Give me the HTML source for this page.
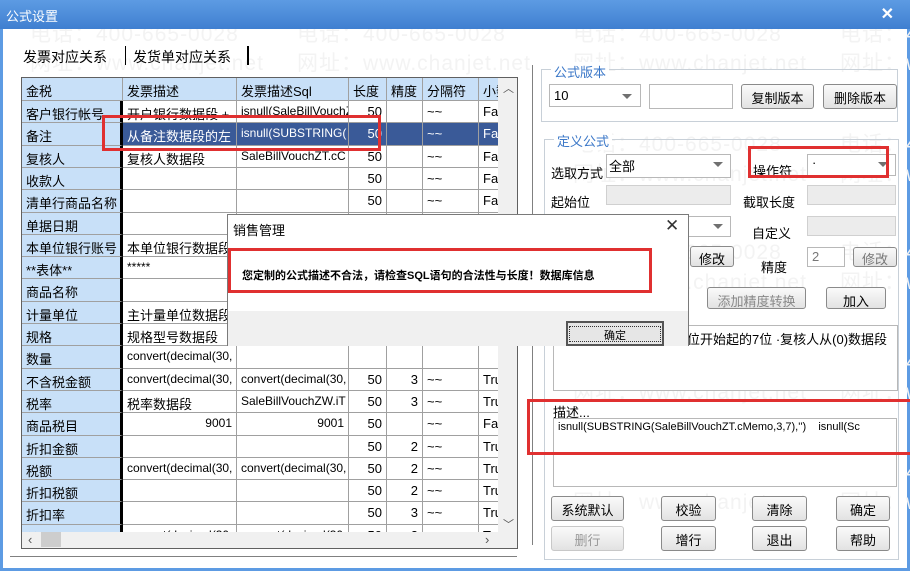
<!DOCTYPE html>
<html><head><meta charset="utf-8"><style>
*{margin:0;padding:0;box-sizing:border-box}
body{width:910px;height:571px;overflow:hidden;background:#fff;font-family:"Liberation Sans","Noto Sans CJK SC",sans-serif;font-size:13px;color:#000;position:relative}
.a{position:absolute}
.wm{position:absolute;color:#f3f3f3;font-size:21px;white-space:nowrap;letter-spacing:1px}
.title{left:0;top:0;width:910px;height:29px;background:linear-gradient(#5d9be3,#3f7fd0);color:#fff;font-size:13px;padding:6px 0 0 6px}
.cell{position:absolute;border-right:1px solid #a0a0a0;border-bottom:1px solid #a0a0a0;padding:3px 4px 0;white-space:nowrap;overflow:hidden;font-size:13px}
.hd{background:#c8e0f8}
.lc{background:#c8e0f8;border-right:3px solid #000}
.btn{position:absolute;border:1px solid #8a8a8a;border-radius:3px;background:linear-gradient(#fafafa,#e2e2e2);text-align:center;font-size:13px;padding-top:3px}
.inp{position:absolute;border:1px solid #b8b8b8;background:#fff}
.dis{background:#ececec;border-color:#d0d0d0}
.arrow{position:absolute;width:0;height:0;border-left:5px solid transparent;border-right:5px solid transparent;border-top:5px solid #707070}
.red{position:absolute;border:3px solid #e03030}
.grp{position:absolute;border:1px solid #c8d0d8}
.lg{position:absolute;background:#fff;color:#3c78c8;padding:0 3px;font-size:13px}
</style></head><body>
<div class="a" style="left:0;top:0;width:910px;height:571px;border:3px solid #5d9be3;border-top:none"></div>
<div class="wm" style="left:30px;top:18px">电话：400-665-0028</div><div class="wm" style="left:297px;top:18px">电话：400-665-0028</div><div class="wm" style="left:573px;top:18px">电话：400-665-0028</div><div class="wm" style="left:840px;top:18px">电话：4</div>
<div class="wm" style="left:30px;top:47px">网址：www.chanjet.net</div><div class="wm" style="left:297px;top:47px">网址：www.chanjet.net</div><div class="wm" style="left:573px;top:47px">网址：www.chanjet.net</div><div class="wm" style="left:840px;top:47px">网址：w</div>
<div class="wm" style="left:573px;top:128px">电话：400-665-0028</div><div class="wm" style="left:840px;top:128px">电话：4</div>
<div class="wm" style="left:573px;top:158px">网址：www.chanjet.net</div><div class="wm" style="left:840px;top:158px">网址：w</div>
<div class="wm" style="left:573px;top:236px">电话：400-665-0028</div><div class="wm" style="left:840px;top:236px">电话：4</div>
<div class="wm" style="left:573px;top:266px">网址：www.chanjet.net</div><div class="wm" style="left:840px;top:266px">网址：w</div>
<div class="wm" style="left:573px;top:346px">电话：400-665-0028</div><div class="wm" style="left:840px;top:346px">电话：4</div>
<div class="wm" style="left:573px;top:376px">网址：www.chanjet.net</div><div class="wm" style="left:840px;top:376px">网址：w</div>
<div class="wm" style="left:573px;top:456px">电话：400-665-0028</div><div class="wm" style="left:840px;top:456px">电话：4</div>
<div class="wm" style="left:573px;top:486px">网址：www.chanjet.net</div><div class="wm" style="left:840px;top:486px">网址：w</div>

<div class="a title">公式设置<span style="position:absolute;right:16px;top:4px;font-weight:bold;font-size:16px">✕</span></div>

<div class="a" style="left:23px;top:47px;font-size:14px">发票对应关系</div>
<div class="a" style="left:125px;top:46px;width:1px;height:19px;background:#000"></div>
<div class="a" style="left:133px;top:47px;font-size:14px">发货单对应关系</div>
<div class="a" style="left:247px;top:46px;width:2px;height:19px;background:#000"></div>
<div class="a" style="left:532px;top:65px;width:1px;height:480px;background:#808080"></div>
<div class="a" style="left:10px;top:556px;width:507px;height:1px;background:#808080"></div>

<div class="a" style="left:21px;top:77px;width:497px;height:472px;border:1px solid #606060;overflow:hidden;background:#fff">
<div id="g" style="position:absolute;left:0;top:0;width:476px;height:454px;overflow:hidden"></div>
<div class="a" style="left:476px;top:0;width:19px;height:454px;background:#f0f0f0"><div class="a" style="left:2px;top:172px;width:15px;height:15px;background:#cdcdcd"></div><div class="a" style="left:5px;top:2px;font-size:11px;color:#555">︿</div><div class="a" style="left:5px;top:438px;font-size:11px;color:#555">﹀</div></div>
<div class="a" style="left:0;top:454px;width:495px;height:16px;background:#f0f0f0"><div class="a" style="left:19px;top:0px;width:20px;height:15px;background:#cdcdcd"></div><div class="a" style="left:6px;top:0;color:#555">‹</div><div class="a" style="left:463px;top:0;color:#555">›</div></div>
</div>

<div class="grp" style="left:541px;top:69px;width:357px;height:53px"></div>
<div class="lg" style="left:551px;top:62px">公式版本</div>
<div class="inp" style="left:549px;top:84px;width:92px;height:23px;padding:3px 4px">10</div><div class="arrow" style="left:622px;top:94px"></div>
<div class="inp" style="left:649px;top:84px;width:84px;height:25px"></div>
<div class="btn" style="left:741px;top:84px;width:73px;height:25px">复制版本</div>
<div class="btn" style="left:823px;top:84px;width:74px;height:25px">删除版本</div>

<div class="grp" style="left:544px;top:139px;width:355px;height:421px"></div>
<div class="lg" style="left:554px;top:131px">定义公式</div>
<div class="a" style="left:551px;top:163px">选取方式</div>
<div class="inp" style="left:606px;top:154px;width:125px;height:24px;padding:1px 2px">全部</div><div class="arrow" style="left:713px;top:162px"></div>
<div class="a" style="left:753px;top:161px">操作符</div>
<div class="inp" style="left:807px;top:154px;width:89px;height:22px;padding:0 4px">·</div><div class="arrow" style="left:878px;top:162px"></div>
<div class="red" style="left:748px;top:146px;width:141px;height:32px"></div>
<div class="a" style="left:551px;top:192px">起始位</div>
<div class="inp dis" style="left:606px;top:185px;width:125px;height:20px"></div>
<div class="a" style="left:743px;top:192px">截取长度</div>
<div class="inp dis" style="left:807px;top:185px;width:89px;height:20px"></div>
<div class="inp" style="left:688px;top:216px;width:43px;height:21px"></div><div class="arrow" style="left:713px;top:224px"></div>
<div class="a" style="left:752px;top:223px">自定义</div>
<div class="inp dis" style="left:807px;top:216px;width:89px;height:20px"></div>
<div class="btn" style="left:690px;top:246px;width:44px;height:21px;padding-top:2px">修改</div>
<div class="a" style="left:761px;top:257px">精度</div>
<div class="inp" style="left:807px;top:247px;width:38px;height:20px;color:#777;padding:1px 4px">2</div>
<div class="btn" style="left:853px;top:247px;width:44px;height:20px;padding-top:1px;color:#777">修改</div>
<div class="btn" style="left:707px;top:287px;width:99px;height:22px;color:#888">添加精度转换</div>
<div class="btn" style="left:826px;top:287px;width:60px;height:22px">加入</div>
<div class="inp" style="left:553px;top:325px;width:345px;height:66px;overflow:hidden;white-space:nowrap;padding:3px 0 0 133px">位开始起的7位 ·复核人从(0)数据段</div>
<div class="a" style="left:553px;top:402px">描述...</div>
<div class="inp" style="left:553px;top:418px;width:344px;height:69px;overflow:hidden;white-space:nowrap;padding:2px 4px;font-size:11px">isnull(SUBSTRING(SaleBillVouchZT.cMemo,3,7),'')&nbsp;&nbsp;&nbsp;&nbsp;isnull(Sc</div>
<div class="red" style="left:527px;top:399px;width:386px;height:56px"></div>
<div class="btn" style="left:551px;top:496px;width:73px;height:25px">系统默认</div>
<div class="btn" style="left:661px;top:496px;width:55px;height:25px">校验</div>
<div class="btn" style="left:752px;top:496px;width:55px;height:25px">清除</div>
<div class="btn" style="left:836px;top:496px;width:54px;height:25px">确定</div>
<div class="btn" style="left:551px;top:526px;width:73px;height:25px;color:#999;border-color:#c8c8c8">删行</div>
<div class="btn" style="left:661px;top:526px;width:55px;height:25px">增行</div>
<div class="btn" style="left:752px;top:526px;width:55px;height:25px">退出</div>
<div class="btn" style="left:836px;top:526px;width:54px;height:25px">帮助</div>

<div class="red" style="left:102px;top:115px;width:279px;height:36px"></div>

<div class="a" style="left:227px;top:214px;width:462px;height:132px;background:#fff;border:1px solid #7a7a7a">
<div class="a" style="left:5px;top:5px">销售管理</div>
<div class="a" style="left:437px;top:1px;font-size:17px;color:#333">✕</div>
<div class="a" style="left:14px;top:52px;font-size:11px;font-weight:bold;white-space:nowrap">您定制的公式描述不合法，请检查SQL语句的合法性与长度！数据库信息</div>
<div class="a" style="left:0;top:96px;width:460px;height:35px;background:#f0f0f0"></div>
<div class="a" style="left:338px;top:106px;width:98px;height:25px;border:2px solid #555;background:#e6e6e6;text-align:center;font-size:11px;padding-top:2px"><div style="border:1px dotted #333;margin:1px;height:16px">确定</div></div>
</div>
<div class="red" style="left:228px;top:248px;width:424px;height:45px"></div>

<script>
var rows=[["客户银行帐号","开户银行数据段 +","isnull(SaleBillVouchZ","50","","~~","Fa"],["备注","从备注数据段的左","isnull(SUBSTRING(","50","","~~","Fa"],["复核人","复核人数据段","SaleBillVouchZT.cC","50","","~~","Fa"],["收款人","","","50","","~~","Fa"],["清单行商品名称","","","50","","~~","Fa"],["单据日期","","","","","",""],["本单位银行账号","本单位银行数据段","","","","",""],["**表体**","*****","","","","",""],["商品名称","","","","","",""],["计量单位","主计量单位数据段","","","","",""],["规格","规格型号数据段","","","","",""],["数量","convert(decimal(30,","","","","",""],["不含税金额","convert(decimal(30,","convert(decimal(30,","50","3","~~","Tru"],["税率","税率数据段","SaleBillVouchZW.iT","50","3","~~","Tru"],["商品税目","9001","9001","50","","~~","Fa"],["折扣金额","","","50","2","~~","Tru"],["税额","convert(decimal(30,","convert(decimal(30,","50","2","~~","Tru"],["折扣税额","","","50","2","~~","Tru"],["折扣率","","","50","3","~~","Tru"],["单价","convert(decimal(30,","convert(decimal(30,","50","2","~~","Tru"]];
var cx=[0,101,215,327,365,401,457],cw=[101,114,112,38,36,56,30];
var hd=["金税","发票描述","发票描述Sql","长度","精度","分隔符","小数"];
var g=document.getElementById('g'),h='';
for(var j=0;j<7;j++)h+='<div class="cell hd" style="left:'+cx[j]+'px;top:0;width:'+cw[j]+'px;height:23px">'+hd[j]+'</div>';
for(var i=0;i<rows.length;i++){var t=Math.round(23+i*22.3),nt=Math.round(23+(i+1)*22.3);for(var j=0;j<7;j++){var s='left:'+cx[j]+'px;top:'+t+'px;width:'+cw[j]+'px;height:'+(nt-t)+'px;';var c='cell'+(j==0?' lc':'');if(i==1&&j>0)s+='background:#3a5a98;color:#fff;';if(j>=3&&j<=4||(i==14&&(j==1||j==2)))s+='text-align:right;';var v=rows[i][j];if(j==1||j==2)s+='font-size:'+(/^[\x00-\x7f]*$/.test(v)?'12px':'13px')+';';h+='<div class="'+c+'" style="'+s+'">'+v+'</div>';}}
g.innerHTML=h;
</script>
</body></html>
